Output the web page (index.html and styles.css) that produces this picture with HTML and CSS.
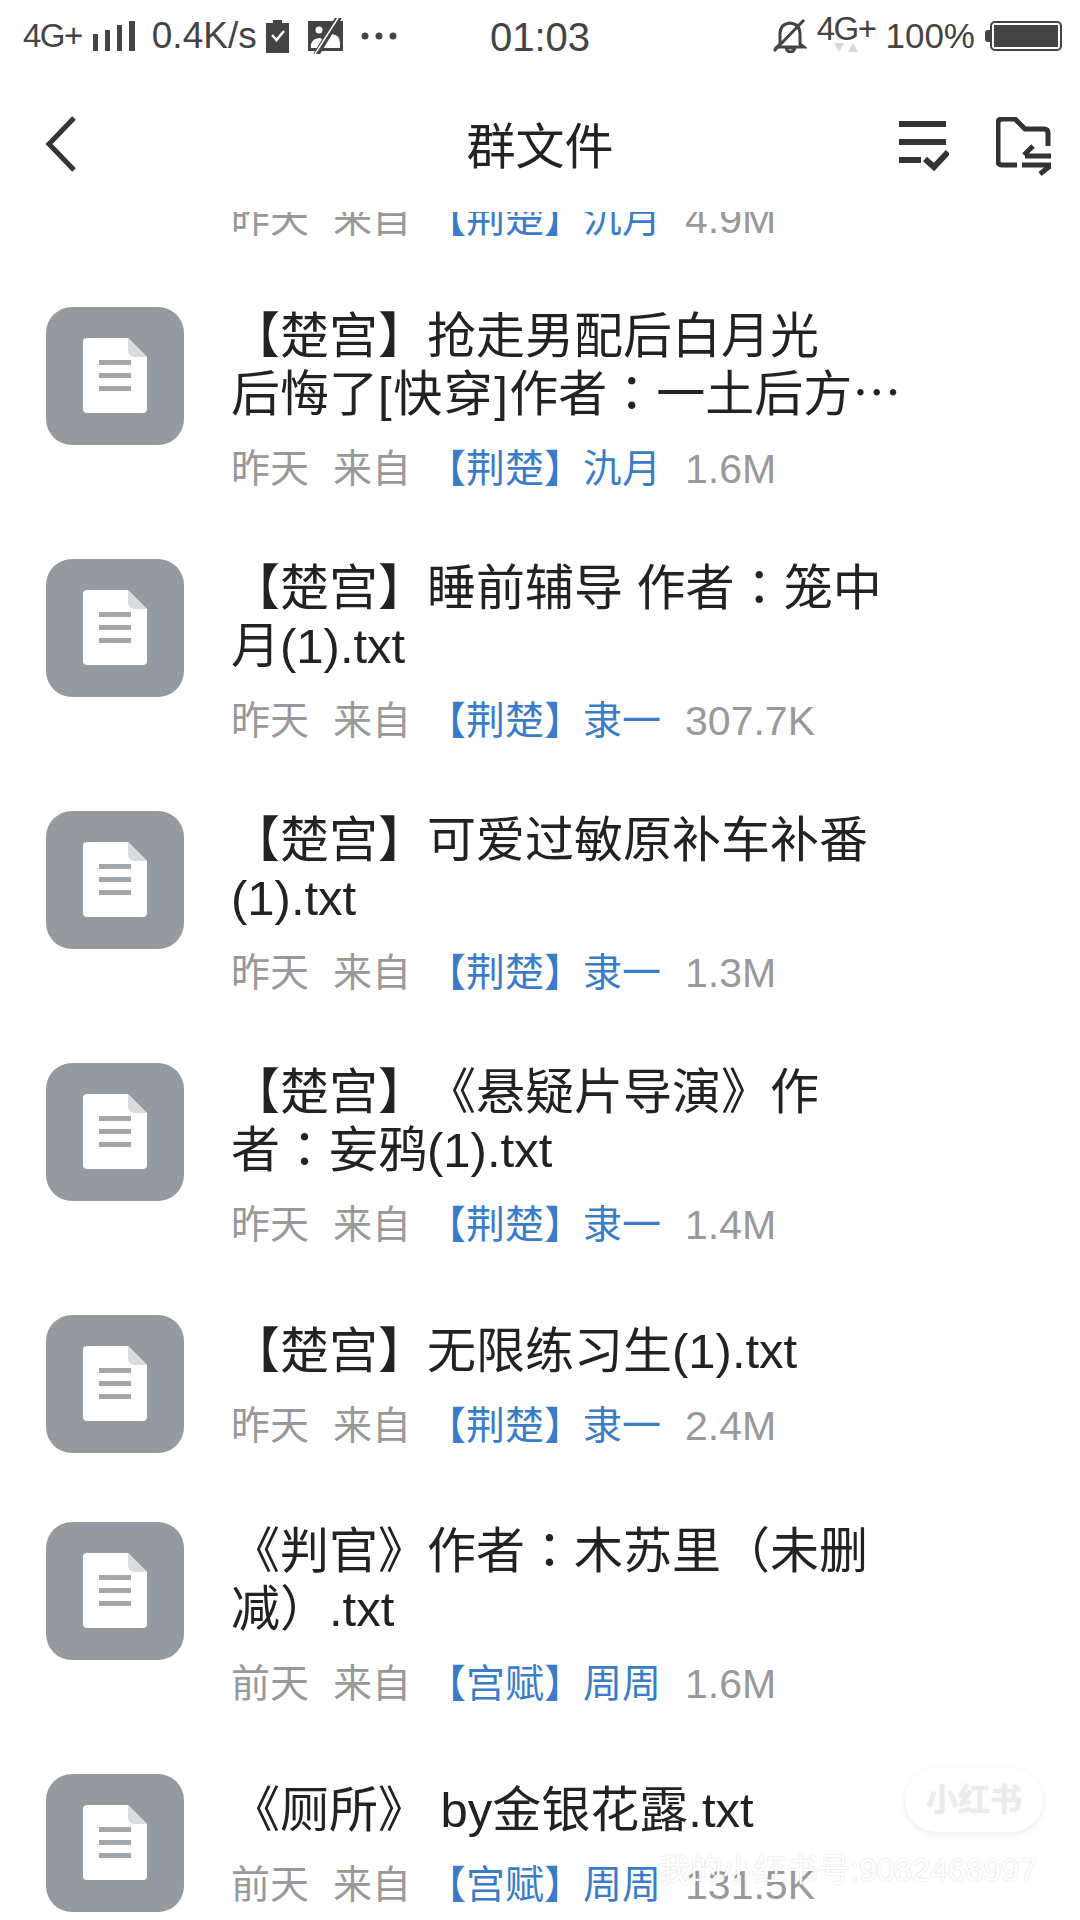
FILE: index.html
```html
<!DOCTYPE html>
<html lang="zh-CN">
<head>
    <meta charset="UTF-8">
    <title>群文件</title>
    <link rel="stylesheet" href="styles.css">
</head>
<body>
    <svg class="icon-defs" width="0" height="0">
        <symbol id="file-icon" viewBox="0 0 138 138">
            <rect width="138" height="138" rx="26" fill="#949ba0"/>
            <path d="M41 31H82L101 50V102Q101 106 97 106H41Q37 106 37 102V35Q37 31 41 31Z" fill="#fff"/>
            <path d="M82 31L101 50H89Q82 50 82 43Z" fill="#d9dcde"/>
            <rect x="53" y="53" width="32" height="5" fill="#a1a7ab"/>
            <rect x="53" y="66" width="32" height="5" fill="#a1a7ab"/>
            <rect x="53" y="79" width="32" height="5" fill="#a1a7ab"/>
        </symbol>
    </svg>

    <div class="status-bar">
        <div class="status-left">
            <span class="net">4G+</span>
            <svg class="signal" width="42" height="30" viewBox="0 0 42 30"><path d="M0 13h5v17H0zM12 9h5v21h-5zM24 4h5v26h-5zM36 0h6v30h-6z" fill="#444"/></svg>
            <span class="speed">0.4K/s</span>
            <svg width="23" height="33" viewBox="0 0 23 33"><path d="M0 3H7V0H16V3H23V33H0Z" fill="#444"/><path d="M6 15L10.500 20L18 11" fill="none" stroke="#fff" stroke-width="2.500"/></svg>
            <svg class="photo" width="36" height="36" viewBox="0 0 36 36"><path d="M1 3H36V33H1Z" fill="#444"/><circle cx="12" cy="12" r="3.500" fill="#fff"/><path d="M4 29V26Q6 20 13 20L19 23L25 16Q33 17 33 25V30H4Z" fill="#fff"/><path d="M32 -1L9 37" stroke="#444" stroke-width="6"/><path d="M31 0L8 36" stroke="#fff" stroke-width="1.500"/></svg>
            <svg class="dots" width="36" height="8" viewBox="0 0 36 8"><circle cx="4" cy="4" r="3.500" fill="#444"/><circle cx="18" cy="4" r="3.500" fill="#444"/><circle cx="32" cy="4" r="3.500" fill="#444"/></svg>
        </div>
        <div class="status-time">01:03</div>
        <div class="status-right">
            <svg width="34" height="34" viewBox="0 0 34 34"><path d="M7 25V15Q7 5 17 4Q27 5 27 15V25L31 28H4Z M13 29H22Q21 33 17.500 33Q14 33 13 29Z" fill="none" stroke="#444" stroke-width="3"/><path d="M1 32L31 1" stroke="#444" stroke-width="3"/></svg>
            <div class="net-stack">
                <span class="net">4G+</span>
                <svg width="24" height="10" viewBox="0 0 24 10"><path d="M0 0H10L5 9ZM14 9H24L19 0Z" fill="#d8d8d8"/></svg>
            </div>
            <span class="percent">100%</span>
            <div class="battery"><div class="battery-nub"></div><div class="battery-body"><div class="battery-fill"></div></div></div>
        </div>
    </div>

    <div class="nav-bar">
        <svg class="back" width="34" height="58" viewBox="0 0 34 58"><path d="M29 3L4 29L29 55" fill="none" stroke="#333" stroke-width="5"/></svg>
        <div class="nav-title">群文件</div>
        <div class="nav-actions">
            <svg width="50" height="50" viewBox="0 0 50 50"><path d="M0 3H47M0 21H47M0 39H22" fill="none" stroke="#333" stroke-width="6"/><path d="M26 38L35 46L49 31" fill="none" stroke="#333" stroke-width="6"/></svg>
            <svg width="56" height="59" viewBox="0 0 56 59"><path d="M21 48H6Q2 48 2 44V6Q2 2 6 2H19L29 12H48Q52 12 52 16V29" fill="none" stroke="#333" stroke-width="5"/><path d="M29 39H55M26 48H55M37 29L28 38M44 57L54 49" fill="none" stroke="#333" stroke-width="5"/></svg>
        </div>
    </div>

    <div class="file-list">
        <div class="file-meta clipped">
            <span>昨天</span><span>来自</span><span class="sender">【荆楚】氿月</span><span class="file-size">4.9M</span>
        </div>

        <div class="file-row">
            <svg class="file-icon"><use href="#file-icon"/></svg>
            <div class="file-text">
                <div class="file-title">【楚宫】抢走男配后白月光<br>后悔了<span class="wide">[快穿]</span>作者<span class="tc" lang="zh-TW">：</span>一土后方<span class="tc">…</span></div>
                <div class="file-meta"><span>昨天</span><span>来自</span><span class="sender">【荆楚】氿月</span><span class="file-size">1.6M</span></div>
            </div>
        </div>

        <div class="file-row">
            <svg class="file-icon"><use href="#file-icon"/></svg>
            <div class="file-text">
                <div class="file-title">【楚宫】睡前辅导 作者<span class="tc" lang="zh-TW">：</span>笼中<br>月(1).txt</div>
                <div class="file-meta"><span>昨天</span><span>来自</span><span class="sender">【荆楚】隶一</span><span class="file-size">307.7K</span></div>
            </div>
        </div>

        <div class="file-row">
            <svg class="file-icon"><use href="#file-icon"/></svg>
            <div class="file-text">
                <div class="file-title">【楚宫】可爱过敏原补车补番<br>(1).txt</div>
                <div class="file-meta"><span>昨天</span><span>来自</span><span class="sender">【荆楚】隶一</span><span class="file-size">1.3M</span></div>
            </div>
        </div>

        <div class="file-row">
            <svg class="file-icon"><use href="#file-icon"/></svg>
            <div class="file-text">
                <div class="file-title">【楚宫】《悬疑片导演》作<br>者<span class="tc" lang="zh-TW">：</span>妄鸦(1).txt</div>
                <div class="file-meta"><span>昨天</span><span>来自</span><span class="sender">【荆楚】隶一</span><span class="file-size">1.4M</span></div>
            </div>
        </div>

        <div class="file-row">
            <svg class="file-icon"><use href="#file-icon"/></svg>
            <div class="file-text">
                <div class="file-title">【楚宫】无限练习生(1).txt</div>
                <div class="file-meta"><span>昨天</span><span>来自</span><span class="sender">【荆楚】隶一</span><span class="file-size">2.4M</span></div>
            </div>
        </div>

        <div class="file-row">
            <svg class="file-icon"><use href="#file-icon"/></svg>
            <div class="file-text">
                <div class="file-title">《判官》作者<span class="tc" lang="zh-TW">：</span>木苏里（未删<br>减）.txt</div>
                <div class="file-meta"><span>前天</span><span>来自</span><span class="sender">【宫赋】周周</span><span class="file-size">1.6M</span></div>
            </div>
        </div>

        <div class="file-row">
            <svg class="file-icon"><use href="#file-icon"/></svg>
            <div class="file-text">
                <div class="file-title">《厕所》 by金银花露.txt</div>
                <div class="file-meta"><span>前天</span><span>来自</span><span class="sender">【宫赋】周周</span><span class="file-size">131.5K</span></div>
            </div>
        </div>
    </div>

    <div class="watermark">
        <div class="watermark-logo">小红书</div>
        <div class="watermark-id">我的小红书号:9082468997</div>
    </div>
</body>
</html>
```

FILE: styles.css
```css
body {
    margin: 0;
    width: 1080px;
    height: 1920px;
    overflow: hidden;
    position: relative;
    background-color: #fff;
    font-family: "Liberation Sans", "Noto Sans CJK SC", sans-serif;
    text-spacing-trim: space-all;
}

.icon-defs {
    position: absolute;
}

/* 状态栏 */
.status-bar {
    display: grid;
    grid-template-columns: 1fr auto 1fr;
    align-items: center;
    height: 72px;
    padding: 0 18px 0 23px;
    color: #444;
}

.status-left,
.status-right {
    display: flex;
    align-items: center;
}

.status-left {
    gap: 9px;
}

.status-right {
    justify-content: flex-end;
    gap: 10px;
}

.net {
    font-size: 33px;
    letter-spacing: -1.5px;
}

.signal {
    margin-left: 2px;
}

.speed {
    font-size: 37px;
    margin-left: 8px;
}

.percent {
    font-size: 35px;
}

.photo {
    margin-left: 9px;
}

.dots {
    margin-left: 9px;
}

.status-time {
    font-size: 40px;
    padding-top: 2px;
    margin-right: 5px;
}

.net-stack {
    display: flex;
    flex-direction: column;
    align-items: center;
    margin-top: -6px;
}

.net-stack svg {
    margin-top: -1px;
}

.net-stack .net {
    line-height: 30px;
}

.battery {
    display: flex;
    align-items: center;
}

.battery-nub {
    width: 5px;
    height: 12px;
    background-color: #444;
    border-radius: 3px 0 0 3px;
}

.battery-body {
    width: 72px;
    height: 30px;
    box-sizing: border-box;
    border: 2px solid #444;
    border-radius: 5px;
    padding: 2px;
}

.battery-fill {
    height: 100%;
    background-color: #444;
}

/* 标题栏 */
.nav-bar {
    position: relative;
    display: flex;
    align-items: center;
    justify-content: space-between;
    height: 140px;
    padding: 0 28px 0 45px;
    background-color: #fff;
    box-shadow: 0 1px 2px rgba(0, 0, 0, 0.02);
    z-index: 2;
}

.back {
    margin-top: 4px;
}

.nav-title {
    position: absolute;
    left: 0;
    right: 0;
    text-align: center;
    font-size: 49px;
    color: #222;
}

.nav-actions {
    display: flex;
    align-items: center;
    gap: 47px;
    margin-top: 8px;
}

/* 文件列表 */
.file-list {
    height: 1708px;
    overflow: hidden;
}

.file-row {
    display: flex;
    align-items: center;
    gap: 47px;
    min-height: 140px;
    margin-bottom: 67px;
    padding-left: 46px;
}

.file-icon {
    flex: none;
    align-self: flex-start;
    width: 138px;
    height: 138px;
}

.file-title {
    font-size: 49px;
    line-height: 58px;
    color: #222;
    white-space: nowrap;
}

.tc {
    display: inline-block;
    font-family: "Noto Sans CJK TC", sans-serif;
    line-height: 49px;
}

.wide {
    letter-spacing: 1.5px;
}

.file-meta {
    display: flex;
    gap: 24px;
    margin-top: 23px;
    font-size: 39px;
    line-height: 46px;
    color: #999;
}

.file-meta.clipped {
    margin: -16px 0 65px 231px;
}

.sender {
    color: #3a7cc9;
    margin-left: -8px;
}

.file-size {
    font-size: 41px;
}

/* 水印 */
.watermark {
    position: absolute;
    right: 0;
    bottom: 0;
    color: #fff;
}

.watermark-logo {
    position: absolute;
    right: 37px;
    bottom: 88px;
    width: 138px;
    height: 64px;
    border-radius: 32px;
    background-color: #fff;
    box-shadow: 0 2px 6px rgba(0, 0, 0, 0.08);
    color: #ebebeb;
    font-size: 32px;
    font-weight: bold;
    line-height: 64px;
    text-align: center;
    text-shadow: 0 0 2px #ebebeb;
}

.watermark-id {
    position: absolute;
    right: 43px;
    bottom: 30px;
    font-size: 32px;
    white-space: nowrap;
    text-shadow: 0 0 2px rgba(0, 0, 0, 0.18);
}
```
